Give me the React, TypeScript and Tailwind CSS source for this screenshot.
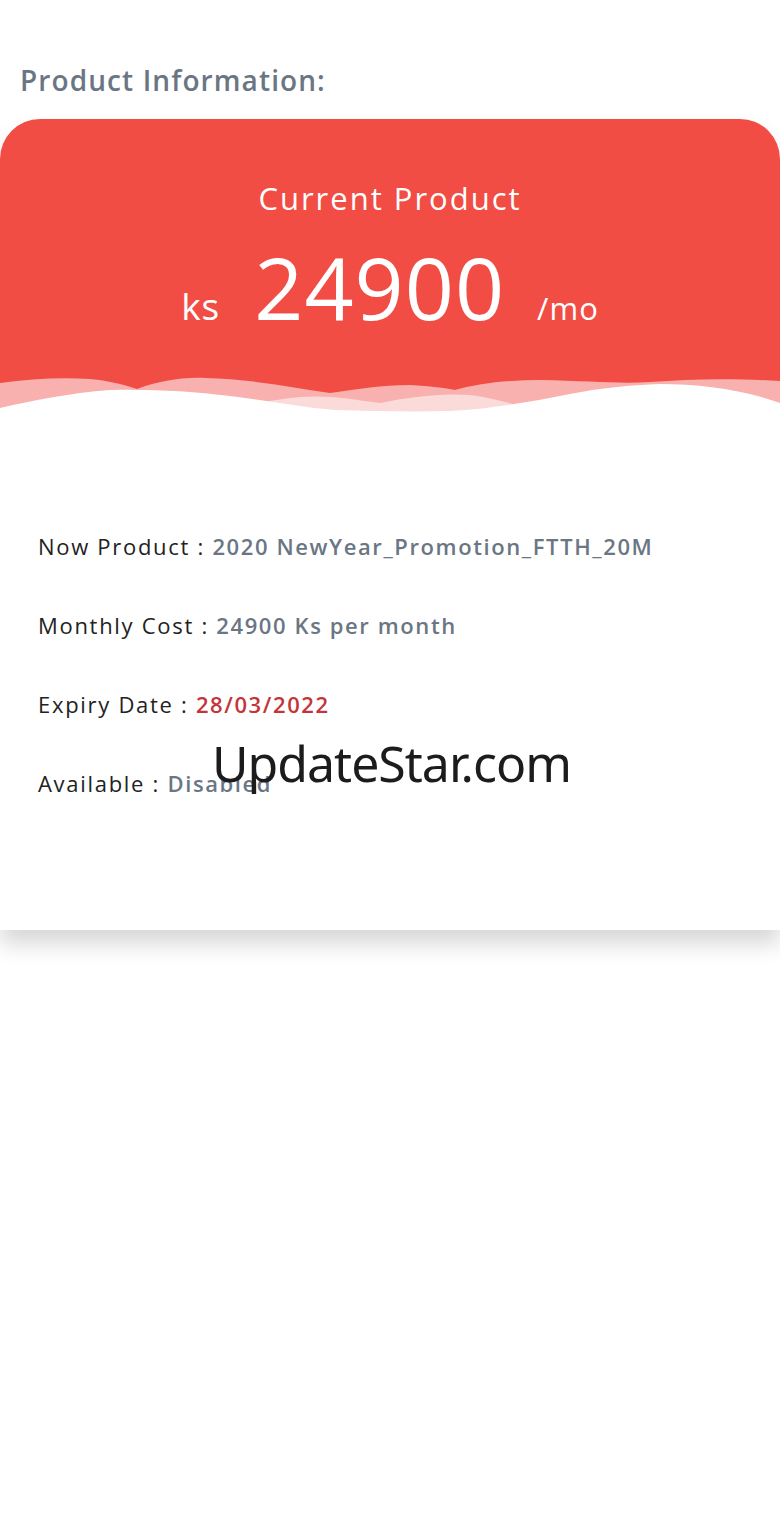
const rows = [
  { label: "Now Product", value: "2020 NewYear_Promotion_FTTH_20M", tone: "text-[#6b7684]" },
  { label: "Monthly Cost", value: "24900 Ks per month", tone: "text-[#6b7684]" },
  { label: "Expiry Date", value: "28/03/2022", tone: "text-[#c4353a]" },
  { label: "Available", value: "Disabled", tone: "text-[#6b7684]" },
];

function Wave() {
  return (
    <svg viewBox="0 0 780 46" className="block w-full h-[46px]" preserveAspectRatio="none" aria-hidden="true">
      <rect width="780" height="46" fill="#f14d44" />
      <path
        d="M0 14 C30 10 60 8 90 10 C110 12 125 16 137 20 C160 12 180 8 205 9 C250 10 290 18 330 24 C360 20 380 16 410 16 C430 17 445 19 455 21 C480 14 510 11 540 11 C590 12 620 15 650 13 C690 10 730 9 780 12 L780 46 L0 46 Z"
        fill="#f8b1ae"
      />
      <path
        d="M180 46 C230 40 260 32 300 28 C330 26 350 30 380 34 C410 28 440 24 470 26 C500 30 520 38 560 46 Z"
        fill="#fbdada"
      />
      <path
        d="M0 39 C30 32 70 24 110 21 C150 20 190 22 230 27 C270 32 300 38 335 41 C370 42 410 43 450 42 C490 40 530 33 570 25 C600 19 630 16 660 15 C700 15 740 20 780 34 L780 46 L0 46 Z"
        fill="#ffffff"
      />
    </svg>
  );
}

export default function App() {
  return (
    <div className="relative min-h-[1521px] bg-white font-['Open_Sans',sans-serif]">
      <div className="pt-[58px]">
        <h2 className="px-[20px] text-[28px] leading-[44px] font-semibold text-[#6b7684] tracking-[1.1px]">
          Product Information:
        </h2>

        <div className="mt-[17px] rounded-t-[40px] bg-white shadow-[0_14px_22px_rgba(0,0,0,0.16)] overflow-hidden">
          <div className="bg-[#f14d44] pt-[57px] text-white flex flex-col items-center h-[250px]">
            <p className="text-[31px] leading-[44px] tracking-[2px]">Current Product</p>
            <div className="mt-[17px] flex items-baseline">
              <span className="text-[37px] leading-none tracking-[1px]">ks</span>
              <span className="ml-[34px] text-[86px] leading-[100px] tracking-[1px]">24900</span>
              <span className="ml-[32px] text-[31px] leading-none tracking-[1px]">/mo</span>
            </div>
          </div>
          <Wave />

          <div className="pt-[116px] pb-[132px] px-[38px] flex flex-col gap-[49px]">
            {rows.map((r) => (
              <p key={r.label} className="text-[22px] leading-[30px] text-[#222222] tracking-[1.7px]">
                {r.label} : <span className={`font-semibold tracking-[1.6px] ${r.tone}`}>{r.value}</span>
              </p>
            ))}
          </div>
        </div>
      </div>

      <div className="absolute left-[212px] top-[727px] text-[50px] leading-[72px] tracking-[-1px] text-[#1c1c1c] font-['Noto_Sans',sans-serif]">
        UpdateStar.com
      </div>
    </div>
  );
}
